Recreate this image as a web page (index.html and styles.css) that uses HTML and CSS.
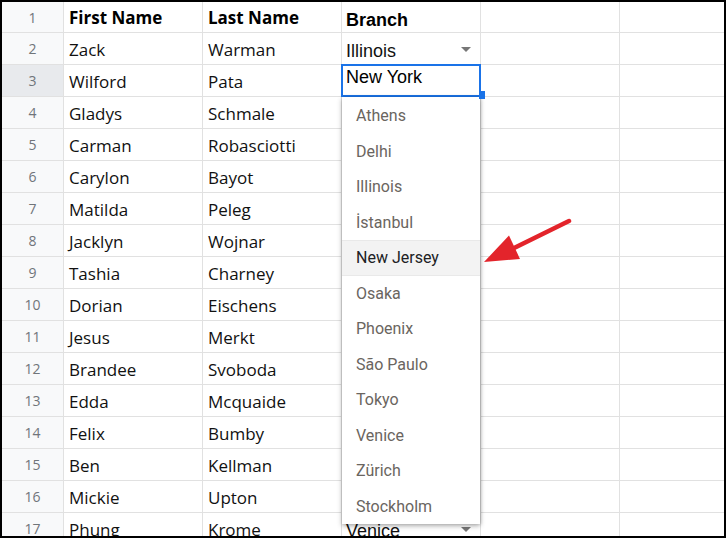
FILE: index.html
```html
<!DOCTYPE html>
<html>
<head>
<meta charset="utf-8">
<link rel="stylesheet" href="styles.css">
</head>
<body>
<div class="frame">
  <div class="sheet">
    <div class="rh">1</div><div class="c hd">First Name</div><div class="c hd">Last Name</div><div class="c cc hd2"><span>Branch</span></div><div class="c"></div><div class="c e"></div>
    <div class="rh">2</div><div class="c">Zack</div><div class="c">Warman</div><div class="c cc"><span>Illinois</span><i class="tri"></i></div><div class="c"></div><div class="c e"></div>
    <div class="rh on">3</div><div class="c">Wilford</div><div class="c">Pata</div><div class="c cc edit"><span>New York</span></div><div class="c"></div><div class="c e"></div>
    <div class="rh">4</div><div class="c">Gladys</div><div class="c">Schmale</div><div class="c"></div><div class="c"></div><div class="c e"></div>
    <div class="rh">5</div><div class="c">Carman</div><div class="c">Robasciotti</div><div class="c"></div><div class="c"></div><div class="c e"></div>
    <div class="rh">6</div><div class="c">Carylon</div><div class="c">Bayot</div><div class="c"></div><div class="c"></div><div class="c e"></div>
    <div class="rh">7</div><div class="c">Matilda</div><div class="c">Peleg</div><div class="c"></div><div class="c"></div><div class="c e"></div>
    <div class="rh">8</div><div class="c">Jacklyn</div><div class="c">Wojnar</div><div class="c"></div><div class="c"></div><div class="c e"></div>
    <div class="rh">9</div><div class="c">Tashia</div><div class="c">Charney</div><div class="c"></div><div class="c"></div><div class="c e"></div>
    <div class="rh">10</div><div class="c">Dorian</div><div class="c">Eischens</div><div class="c"></div><div class="c"></div><div class="c e"></div>
    <div class="rh">11</div><div class="c">Jesus</div><div class="c">Merkt</div><div class="c"></div><div class="c"></div><div class="c e"></div>
    <div class="rh">12</div><div class="c">Brandee</div><div class="c">Svoboda</div><div class="c"></div><div class="c"></div><div class="c e"></div>
    <div class="rh">13</div><div class="c">Edda</div><div class="c">Mcquaide</div><div class="c"></div><div class="c"></div><div class="c e"></div>
    <div class="rh">14</div><div class="c">Felix</div><div class="c">Bumby</div><div class="c"></div><div class="c"></div><div class="c e"></div>
    <div class="rh">15</div><div class="c">Ben</div><div class="c">Kellman</div><div class="c"></div><div class="c"></div><div class="c e"></div>
    <div class="rh">16</div><div class="c">Mickie</div><div class="c">Upton</div><div class="c"></div><div class="c"></div><div class="c e"></div>
    <div class="rh">17</div><div class="c">Phung</div><div class="c">Krome</div><div class="c cc"><span>Venice</span><i class="tri"></i></div><div class="c"></div><div class="c e"></div>
  </div>
  <div class="sel"></div>
  <div class="menu">
    <div class="item">Athens</div>
    <div class="item">Delhi</div>
    <div class="item">Illinois</div>
    <div class="item">İstanbul</div>
    <div class="item hover">New Jersey</div>
    <div class="item">Osaka</div>
    <div class="item">Phoenix</div>
    <div class="item">São Paulo</div>
    <div class="item">Tokyo</div>
    <div class="item">Venice</div>
    <div class="item">Zürich</div>
    <div class="item">Stockholm</div>
  </div>
  <div class="handle"></div>
  <svg class="arrow" width="726" height="538" viewBox="0 0 726 538">
    <line x1="569" y1="221" x2="508" y2="251" stroke="#e3242b" stroke-width="4.5" stroke-linecap="round"/>
    <polygon points="484,262 509,235.5 520,259" fill="#e3242b"/>
  </svg>
</div>
</body>
</html>
```
FILE: styles.css
```css
html, body {
  margin: 0;
  padding: 0;
  background: #fff;
}
.frame {
  position: relative;
  width: 726px;
  height: 538px;
  box-sizing: border-box;
  border: 2px solid #000;
  overflow: hidden;
  background: #fff;
}
.sheet {
  display: grid;
  grid-template-columns: 62px 139px 139px 139px 139px 1fr;
  grid-template-rows: 31px repeat(16, 32px);
}
.rh, .c {
  box-sizing: border-box;
  border-right: 1px solid #e1e1e1;
  border-bottom: 1px solid #e1e1e1;
  overflow: hidden;
  white-space: nowrap;
}
.rh {
  background: #f8f9fa;
  color: #70757a;
  font-family: "Open Sans", sans-serif;
  font-size: 14px;
  display: flex;
  align-items: center;
  justify-content: center;
}
.rh.on {
  background: #e8eaed;
}
.c {
  font-family: "Open Sans", sans-serif;
  font-size: 17px;
  color: #111;
  display: flex;
  align-items: center;
  padding-left: 5px;
  padding-top: 1px;
}
.c.e {
  border-right: none;
}
.hd {
  font-weight: bold;
  color: #000;
}
.cc {
  font-family: "Liberation Sans", Arial, sans-serif;
  font-size: 18px;
  color: #111;
  align-items: flex-start;
  justify-content: space-between;
  padding: 8px 9px 0 4px;
}
.cc span {
  line-height: 20px;
}
.hd2 {
  font-weight: bold;
  color: #000;
}
.cc.edit {
  padding-top: 2px;
  color: #000;
}
.tri {
  display: block;
  width: 0;
  height: 0;
  margin-top: 6px;
  border-left: 5.5px solid transparent;
  border-right: 5.5px solid transparent;
  border-top: 5.5px solid #777;
}
.sel {
  position: absolute;
  left: 339px;
  top: 62px;
  width: 140px;
  height: 33px;
  box-sizing: border-box;
  border: 2px solid #1a73e8;
}
.handle {
  position: absolute;
  left: 477px;
  top: 89px;
  width: 6px;
  height: 8px;
  background: #1a73e8;
}
.menu {
  position: absolute;
  left: 340px;
  top: 95px;
  width: 138px;
  height: 427px;
  box-sizing: border-box;
  padding-top: 1px;
  background: #fff;
  box-shadow: 0 2px 5px rgba(0, 0, 0, 0.3), 1px 0 3px rgba(0, 0, 0, 0.15);
  font-family: Roboto, "Liberation Sans", sans-serif;
  font-size: 16px;
  color: #6a6560;
}
.item {
  height: 35.5px;
  line-height: 35.5px;
  padding-left: 14px;
  box-sizing: border-box;
}
.item.hover {
  background: #f3f3f3;
  color: #202124;
  border-top: 1px solid #e9e9e9;
  border-bottom: 1px solid #e9e9e9;
  line-height: 33.5px;
}
.arrow {
  position: absolute;
  left: -2px;
  top: -2px;
}
```
